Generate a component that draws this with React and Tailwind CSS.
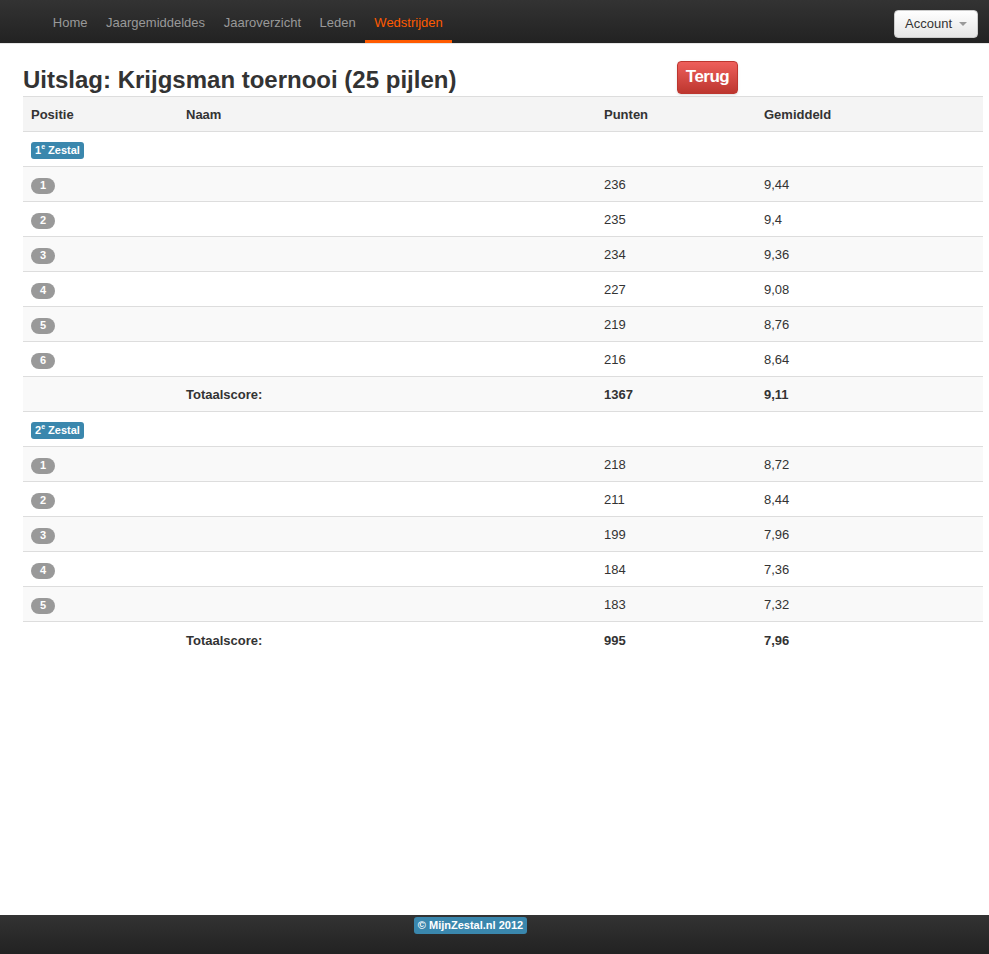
import React from 'react';

const font = { fontFamily: '"Liberation Sans", Arial, sans-serif' };

const navLinks = ['Home', 'Jaargemiddeldes', 'Jaaroverzicht', 'Leden', 'Wedstrijden'];

const groups = [
    {
        nr: 1,
        rows: [
            { pos: 1, punten: 236, gem: '9,44' },
            { pos: 2, punten: 235, gem: '9,4' },
            { pos: 3, punten: 234, gem: '9,36' },
            { pos: 4, punten: 227, gem: '9,08' },
            { pos: 5, punten: 219, gem: '8,76' },
            { pos: 6, punten: 216, gem: '8,64' },
        ],
        totaal: 1367,
        gem: '9,11',
    },
    {
        nr: 2,
        rows: [
            { pos: 1, punten: 218, gem: '8,72' },
            { pos: 2, punten: 211, gem: '8,44' },
            { pos: 3, punten: 199, gem: '7,96' },
            { pos: 4, punten: 184, gem: '7,36' },
            { pos: 5, punten: 183, gem: '7,32' },
        ],
        totaal: 995,
        gem: '7,96',
    },
];

function Navbar() {
    return (
        <div className='h-[44px] bg-linear-to-b from-[#333333] to-[#222222] border-b border-[#e6e6e6] flex items-stretch justify-between pl-[43.5px] pr-[11px]'>
            <div className='flex items-stretch text-[13px]'>
                {navLinks.map((name) => (
                    <a
                        key={name}
                        className={`px-[9.3px] flex items-center ${name === 'Wedstrijden' ? 'text-[#ff5a00] border-b-[3px] border-[#ff5a00] pt-[5px]' : 'text-[#999999] pt-[2px]'}`}
                    >
                        {name}
                    </a>
                ))}
            </div>
            <div className='flex items-center pt-[4px]'>
                <button className='h-[28px] px-[10px] bg-linear-to-b from-white to-[#e6e6e6] rounded-[4px] border border-[#cccccc] text-[13px] text-[#333333] flex items-center gap-[7px]'>
                    Account
                    <span className='w-0 h-0 border-l-[4px] border-r-[4px] border-t-[4px] border-l-transparent border-r-transparent border-t-[#999999]' />
                </button>
            </div>
        </div>
    );
}

function Zestal({ nr }) {
    return (
        <span className='inline-flex items-start h-[17px] px-[4px] rounded-[3px] bg-[#3a87ad] text-white text-[11px] font-bold leading-[17px]'>
            {nr}<sup className='text-[7px] leading-none mt-[4px]'>e</sup>&nbsp;Zestal
        </span>
    );
}

function Pill({ n }) {
    return (
        <span className='inline-flex items-center justify-center w-[24px] h-[16px] rounded-full bg-[#999999] text-white text-[11px] font-bold'>
            {n}
        </span>
    );
}

export default function App() {
    return (
        <div className='min-h-screen flex flex-col bg-white text-[#333333]' style={font}>
            <Navbar />

            <div className='pl-[23px] pr-[6px] pt-[14px] flex-1'>
                <div className='flex items-center h-[38px]'>
                    <h2 className='w-[654px] text-[24px] font-bold text-[#333333] leading-none pt-[6px]'>
                        Uitslag: Krijgsman toernooi (25 pijlen)
                    </h2>
                    <button className='h-[33px] w-[61px] rounded-[4px] bg-linear-to-b from-[#ee5f5b] to-[#bd362f] border border-[#bd362f] text-white text-[17px] font-bold tracking-[-0.5px] shadow-sm'>
                        Terug
                    </button>
                </div>

                <table className='w-full table-fixed text-[13px] border-collapse'>
                    <colgroup>
                        <col className='w-[155px]' />
                        <col className='w-[418px]' />
                        <col className='w-[160px]' />
                        <col />
                    </colgroup>
                    <thead>
                        <tr className='h-[35px] bg-[#f4f4f4] border-t border-b border-[#dddddd] text-left'>
                            <th className='px-[8px] pt-[2px] font-bold'>Positie</th>
                            <th className='px-[8px] pt-[2px] font-bold'>Naam</th>
                            <th className='px-[8px] pt-[2px] font-bold'>Punten</th>
                            <th className='px-[8px] pt-[2px] font-bold'>Gemiddeld</th>
                        </tr>
                    </thead>
                    <tbody>
                        {groups.map((g) => (
                            <React.Fragment key={g.nr}>
                                <tr className='h-[35px] border-t border-[#dddddd] bg-white'>
                                    <td className='px-[8px] pt-[2px]' colSpan={4}><Zestal nr={g.nr} /></td>
                                </tr>
                                {g.rows.map((r, i) => (
                                    <tr key={r.pos} className={`h-[35px] border-t border-[#dddddd] ${i % 2 === 0 ? 'bg-[#f9f9f9]' : 'bg-white'}`}>
                                        <td className='px-[8px] pt-[2px]'><Pill n={r.pos} /></td>
                                        <td className='px-[8px]'></td>
                                        <td className='px-[8px] pt-[2px]'>{r.punten}</td>
                                        <td className='px-[8px] pt-[2px]'>{r.gem}</td>
                                    </tr>
                                ))}
                                <tr className={`h-[35px] border-t border-[#dddddd] font-bold ${g.rows.length % 2 === 0 ? 'bg-[#f9f9f9]' : 'bg-white'}`}>
                                    <td className='px-[8px]'></td>
                                    <td className='px-[8px] pt-[2px]'>Totaalscore:</td>
                                    <td className='px-[8px] pt-[2px]'>{g.totaal}</td>
                                    <td className='px-[8px] pt-[2px]'>{g.gem}</td>
                                </tr>
                            </React.Fragment>
                        ))}
                    </tbody>
                </table>
            </div>

            <div className='h-[39px] bg-linear-to-b from-[#333333] to-[#222222] flex justify-center pt-[2px]'>
                <span className='h-[17px] px-[4px] rounded-[3px] bg-[#3a87ad] text-white text-[11px] font-bold leading-[17px] ml-[-48px]'>
                    © MijnZestal.nl 2012
                </span>
            </div>
        </div>
    );
}
